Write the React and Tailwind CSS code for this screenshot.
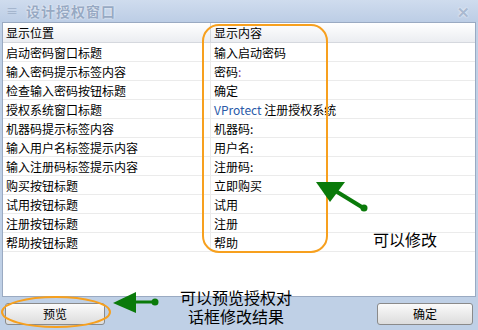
import React from 'react';

const rows = [
  ['启动密码窗口标题', '输入启动密码'],
  ['输入密码提示标签内容', '密码:'],
  ['检查输入密码按钮标题', '确定'],
  ['授权系统窗口标题', 'VProtect 注册授权系统'],
  ['机器码提示标签内容', '机器码:'],
  ['输入用户名标签提示内容', '用户名:'],
  ['输入注册码标签提示内容', '注册码:'],
  ['购买按钮标题', '立即购买'],
  ['试用按钮标题', '试用'],
  ['注册按钮标题', '注册'],
  ['帮助按钮标题', '帮助'],
];

const cjk = { fontFamily: '"Noto Sans CJK SC", "Liberation Sans", sans-serif' };

const Value = ({ text }) => {
  if (text.startsWith('VProtect')) {
    return (
      <span>
        <span className="text-[#2a5aa8]">VProtect</span> 注册授权系统
      </span>
    );
  }
  if (text === '密码:') {
    return (
      <span>
        密码<span className="text-[#8a2a8a]">:</span>
      </span>
    );
  }
  return <span>{text}</span>;
};

export default function App() {
  return (
    <div className="relative w-[478px] h-[330px] overflow-hidden bg-[#bfd0e6] flex flex-col" style={cjk}>
      {/* title bar */}
      <div className="h-[22px] shrink-0 flex items-center px-[6px] bg-gradient-to-b from-[#cfdcee] to-[#bccde5]">
        <span className="text-[#9fb0c8] text-[12px] leading-none mr-[8px]">≡</span>
        <span className="text-[#97a9c3] text-[14px] font-bold tracking-[1px] [text-shadow:0_0_2px_#fff]">设计授权窗口</span>
        <span className="ml-auto mr-[2px] text-[#a9b9d0] text-[15px] font-bold leading-none [text-shadow:0_0_2px_#fff]">✕</span>
      </div>

      {/* grid */}
      <div className="mx-[2px] h-[275px] shrink-0 bg-white border border-[#9aaac2] text-[12px] text-black">
        <div className="grid grid-cols-[208px_1fr] h-[20px] bg-gradient-to-b from-[#ffffff] to-[#ebedf1] border-b border-[#d5d8de]">
          <div className="px-[3px] leading-[20px] border-r border-[#d5d8de]">显示位置</div>
          <div className="px-[3px] leading-[20px]">显示内容</div>
        </div>
        {rows.map(([a, b]) => (
          <div key={a} className="grid grid-cols-[208px_1fr] h-[19px] border-b border-[#ebebeb]">
            <div className="px-[3px] leading-[19px] border-r border-[#ebebeb]">{a}</div>
            <div className="px-[3px] leading-[19px]">
              <Value text={b} />
            </div>
          </div>
        ))}
      </div>

      {/* bottom bar */}
      <div className="flex-1 flex items-center justify-between px-[5px]">
        <button className="w-[100px] h-[22px] rounded-[3px] border border-[#8a8a8a] bg-gradient-to-b from-[#fbfbfb] to-[#dcdcdc] text-[12px] text-black">
          预览
        </button>
        <button className="w-[96px] h-[22px] rounded-[3px] border border-[#8a8a8a] bg-gradient-to-b from-[#fbfbfb] to-[#dcdcdc] text-[12px] text-black">
          确定
        </button>
      </div>

      {/* annotations */}
      <svg className="absolute left-0 top-0 pointer-events-none" width="478" height="330">
        <rect x="203" y="25" width="124" height="227" rx="16" fill="none" stroke="#f7a01e" strokeWidth="2" />
        <ellipse cx="56" cy="312" rx="54" ry="15" fill="none" stroke="#f7a01e" strokeWidth="2" />
        <line x1="365" y1="209" x2="334" y2="190" stroke="#0a7a0a" strokeWidth="4" />
        <circle cx="364" cy="208" r="3.5" fill="#0a7a0a" />
        <polygon points="316,182 345,182 330,202" fill="#0a7a0a" />
        <line x1="154" y1="302" x2="130" y2="302" stroke="#0a7a0a" strokeWidth="3" />
        <circle cx="155" cy="302" r="3.5" fill="#0a7a0a" />
        <polygon points="113,303 136,292 136,313" fill="#0a7a0a" />
      </svg>
      <div className="absolute left-[373px] top-[229px] text-[16px] leading-[20px] text-black">可以修改</div>
      <div className="absolute left-[176px] top-[288px] w-[120px] text-center text-[16px] leading-[19px] text-black">
        <div>可以预览授权对</div>
        <div>话框修改结果</div>
      </div>
    </div>
  );
}
